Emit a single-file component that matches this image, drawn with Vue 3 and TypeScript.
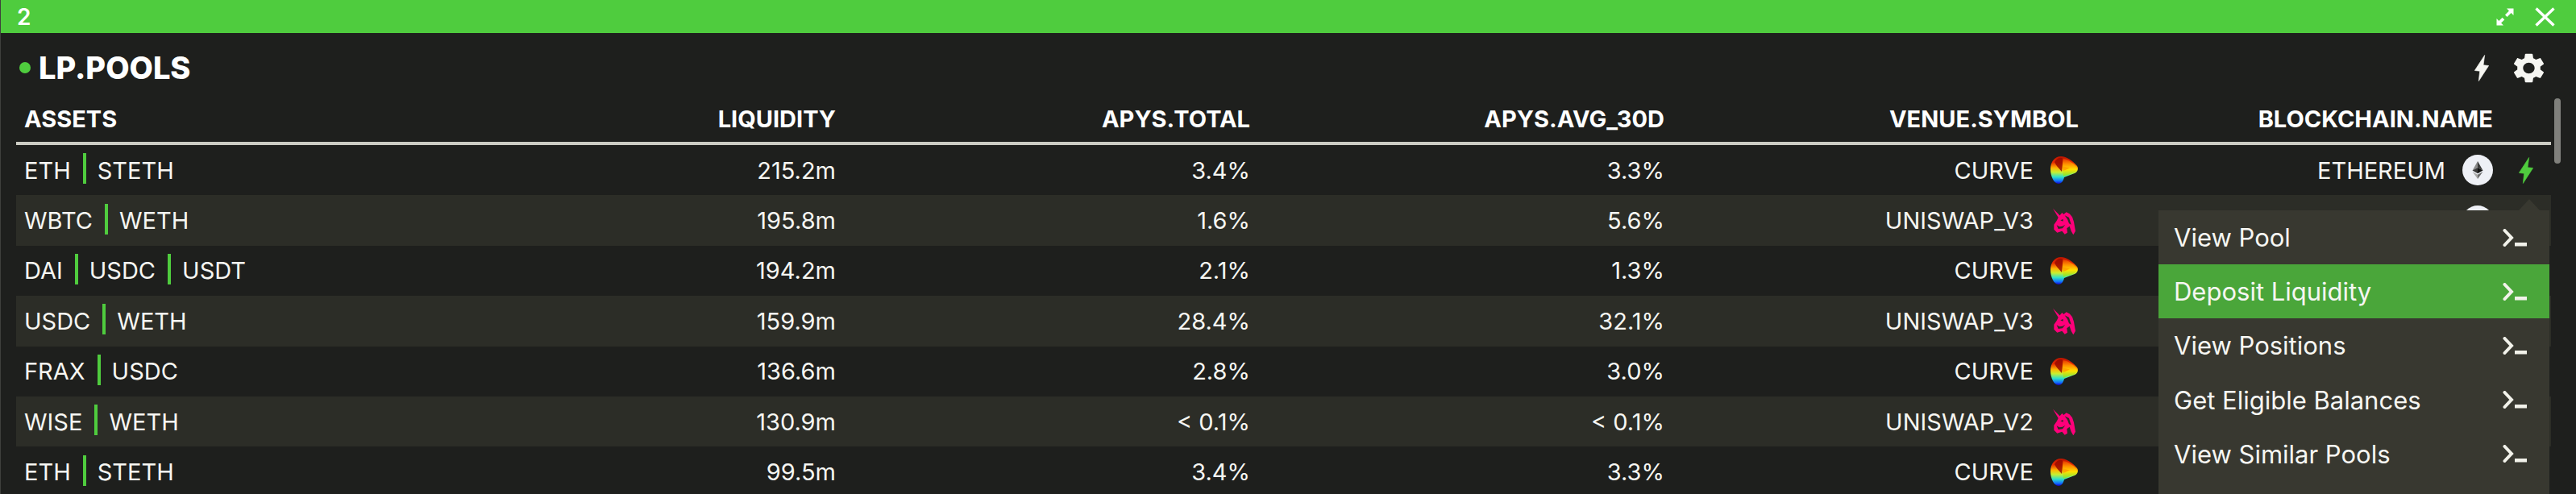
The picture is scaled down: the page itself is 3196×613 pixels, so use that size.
<script setup lang="ts">
interface Pool { assets: string[]; liq: string; total: string; avg: string; venue: string; curve: boolean }
const pools: Pool[] = [
  { assets: ['ETH', 'STETH'], liq: '215.2m', total: '3.4%', avg: '3.3%', venue: 'CURVE', curve: true },
  { assets: ['WBTC', 'WETH'], liq: '195.8m', total: '1.6%', avg: '5.6%', venue: 'UNISWAP_V3', curve: false },
  { assets: ['DAI', 'USDC', 'USDT'], liq: '194.2m', total: '2.1%', avg: '1.3%', venue: 'CURVE', curve: true },
  { assets: ['USDC', 'WETH'], liq: '159.9m', total: '28.4%', avg: '32.1%', venue: 'UNISWAP_V3', curve: false },
  { assets: ['FRAX', 'USDC'], liq: '136.6m', total: '2.8%', avg: '3.0%', venue: 'CURVE', curve: true },
  { assets: ['WISE', 'WETH'], liq: '130.9m', total: '< 0.1%', avg: '< 0.1%', venue: 'UNISWAP_V2', curve: false },
  { assets: ['ETH', 'STETH'], liq: '99.5m', total: '3.4%', avg: '3.3%', venue: 'CURVE', curve: true },
]
const menu = ['View Pool', 'Deposit Liquidity', 'View Positions', 'Get Eligible Balances', 'View Similar Pools']
const bolt = 'M38 1 L1 58 L20 60 L16 97 L53 40 L33 38 Z'
</script>

<template>
  <div class="win">
    <header class="bar">
      <span class="bar-num">2</span>
      <svg class="expand" viewBox="0 0 22 22" width="22" height="22">
        <path d="M13 0.5H21.5V9L18.6 6.1L13.6 11L11 8.4L15.9 3.4Z" fill="#fff" />
        <path d="M9 21.5H0.5V13L3.4 15.9L7.6 11.7L10.3 14.4L6.1 18.6Z" fill="#fff" />
      </svg>
      <svg class="close" viewBox="0 0 25 24" width="25" height="24">
        <path d="M1.5 1.5L23.5 22.5M23.5 1.5L1.5 22.5" stroke="#fff" stroke-width="3.4" fill="none" />
      </svg>
    </header>

    <div class="titlerow">
      <span class="dot"></span>
      <h1 class="title">LP.POOLS</h1>
      <svg class="t-bolt" viewBox="0 0 54 98" width="18" height="33">
        <path :d="bolt" fill="#f6f6f2" stroke="#f6f6f2" stroke-width="2" stroke-linejoin="round" />
      </svg>
      <svg class="gear" viewBox="2.7 2 18.6 20" width="37" height="37" preserveAspectRatio="none">
        <path fill="#f6f6f2" d="M19.14 12.94c.04-.3.06-.61.06-.94 0-.32-.02-.64-.07-.94l2.03-1.58c.18-.14.23-.41.12-.61l-1.92-3.32c-.12-.22-.37-.29-.59-.22l-2.39.96c-.5-.38-1.03-.7-1.62-.94l-.36-2.54c-.04-.24-.24-.41-.48-.41h-3.84c-.24 0-.43.17-.47.41l-.36 2.54c-.59.24-1.13.57-1.62.94l-2.39-.96c-.22-.08-.47 0-.59.22L2.74 8.87c-.12.21-.08.47.12.61l2.03 1.58c-.05.3-.09.63-.09.94s.02.64.07.94l-2.03 1.58c-.18.14-.23.41-.12.61l1.92 3.32c.12.22.37.29.59.22l2.39-.96c.5.38 1.03.7 1.62.94l.36 2.54c.05.24.24.41.48.41h3.84c.24 0 .44-.17.47-.41l.36-2.54c.59-.24 1.13-.56 1.62-.94l2.39.96c.22.08.47 0 .59-.22l1.92-3.32c.12-.22.07-.47-.12-.61l-2.01-1.58zM12 15.6c-1.98 0-3.6-1.62-3.6-3.6s1.62-3.6 3.6-3.6 3.6 1.62 3.6 3.6-1.62 3.6-3.6 3.6z" />
      </svg>
    </div>

    <div class="table">
      <div class="row head">
        <div class="cell first">ASSETS</div>
        <div class="cell">LIQUIDITY</div>
        <div class="cell">APYS.TOTAL</div>
        <div class="cell">APYS.AVG_30D</div>
        <div class="cell">VENUE.SYMBOL</div>
        <div class="cell">BLOCKCHAIN.NAME</div>
        <div class="cell"></div>
      </div>
      <div v-for="(p, i) in pools" :key="i" class="row body" :class="{ alt: i % 2 === 1 }">
        <div class="cell first">
          <template v-for="(a, j) in p.assets" :key="a">
            <span v-if="j > 0" class="sep"></span>
            <span>{{ a }}</span>
          </template>
        </div>
        <div class="cell">{{ p.liq }}</div>
        <div class="cell">{{ p.total }}</div>
        <div class="cell">{{ p.avg }}</div>
        <div class="cell with-icon">
          <span>{{ p.venue }}</span>
          <svg v-if="p.curve" class="venue-ic" viewBox="0 0 34 34" width="34" height="34">
            <defs>
              <linearGradient :id="'cv' + i" x1="0" y1="0" x2="0" y2="1">
                <stop offset="0" stop-color="#b81400" />
                <stop offset="0.22" stop-color="#e82c00" />
                <stop offset="0.42" stop-color="#ffb400" />
                <stop offset="0.58" stop-color="#c8f030" />
                <stop offset="0.75" stop-color="#30e0c8" />
                <stop offset="0.9" stop-color="#1070ff" />
                <stop offset="1" stop-color="#1400c8" />
              </linearGradient>
              <linearGradient :id="'cr' + i" x1="0" y1="0" x2="0" y2="1">
                <stop offset="0" stop-color="#e83800" />
                <stop offset="0.3" stop-color="#ff9000" />
                <stop offset="0.6" stop-color="#ffe000" />
                <stop offset="1" stop-color="#70e840" />
              </linearGradient>
            </defs>
            <path :fill="'url(#cv' + i + ')'" d="M13 0C20 0 28 6 33 12C35 15 34 19 30 21L17 26C16 31 13 34 10 34C4 34 0 24 0 16C0 7 5 0 13 0Z" />
            <path :fill="'url(#cr' + i + ')'" d="M14 3C21 3 28 8 32 13C34 16 33 18.500 30 20L16 25L15 14Z" />
            <path fill="#ffa000" d="M14 12L24 14.500L16 18Z" opacity="0.9" />
            <path fill="#980a00" d="M5 7C8 2 13 0.500 15.500 3L14 19C11 15 7 12 5 7Z" opacity="0.85" />
          </svg>
          <svg v-else class="venue-ic" viewBox="-9 -5 102 102" width="34" height="34">
            <path fill="#ff007a" d="M0 0L27 27L22 37Z" />
            <path fill="#ff007a" fill-rule="evenodd" d="M22 30L34 16L40 22L50 14L62 20L72 32L78 50L84 84L76 98L68 84L62 66L52 74L54 90L44 96L34 84L16 90L4 78L4 60L14 46ZM28 44L38 40L38 48ZM44 26L60 34L68 60L60 56L54 40ZM14 62L20 76L36 74L46 60L36 66L24 68Z" />
          </svg>
        </div>
        <div class="cell with-icon">
          <span>ETHEREUM</span>
          <svg class="eth-ic" viewBox="0 0 38 38" width="38" height="38">
            <circle cx="19" cy="19" r="19" fill="#eef0f6" />
            <path fill="#8a8a8a" d="M19 8L12.500 19.500L19 16Z" />
            <path fill="#3c3c3c" d="M19 8L25.500 19.500L19 16Z" />
            <path fill="#3a3a3a" d="M19 16L12.500 19.500L19 23.200Z" />
            <path fill="#141414" d="M19 16L25.500 19.500L19 23.200Z" />
            <path fill="#a8a8a8" d="M12.500 21L19 30V24.800Z" />
            <path fill="#6c6c6c" d="M25.500 21L19 30V24.800Z" />
          </svg>
        </div>
        <div class="cell bolt-cell">
          <svg v-if="i === 0" viewBox="0 0 54 98" width="18" height="33">
            <path :d="bolt" fill="#4fcc3e" stroke="#4fcc3e" stroke-width="2" stroke-linejoin="round" />
          </svg>
        </div>
      </div>
    </div>

    <div class="scroll"></div>

    <ul class="menu">
      <li v-for="(m, i) in menu" :key="m" class="item" :class="{ on: i === 1 }">
        <span>{{ m }}</span>
        <svg viewBox="0 0 30 22" width="30" height="22">
          <path d="M2.500 2L11 11L2.500 20" stroke="#f2f2ea" stroke-width="4" stroke-linecap="round" fill="none" />
          <rect x="15" y="17" width="15" height="4.500" fill="#f2f2ea" />
        </svg>
      </li>
    </ul>
  </div>
</template>

<style>
html, body { background: #1e1f1d; overflow: hidden; }
</style>

<style scoped>
.win {
  position: relative;
  width: 3196px;
  height: 613px;
  overflow: hidden;
  box-sizing: border-box;
  border-left: 1px solid #3f403c;
  background: #1e1f1d;
  color: #f6f6f2;
  font-family: Inter, "Liberation Sans", sans-serif;
  font-size: 29px;
}
.bar {
  display: flex;
  align-items: center;
  height: 41px;
  padding: 0 26px 0 20px;
  background: #4fcc3e;
  color: #fff;
  font-weight: 600;
  font-size: 28px;
}
.bar-num { flex: 1; }
.expand { margin-right: 26px; }
.titlerow {
  display: flex;
  align-items: center;
  height: 81px;
  padding: 5px 40px 0 23px;
  box-sizing: border-box;
}
.dot {
  width: 14px;
  height: 14px;
  border-radius: 50%;
  background: #4fcc3e;
  margin-right: 10px;
}
.title {
  flex: 1;
  margin: 0;
  font-size: 38px;
  font-weight: 800;
  color: #fff;
}
.t-bolt { margin-right: 31px; }
.table {
  width: 3145px;
  margin-left: 19px;
}
.row {
  display: grid;
  grid-template-columns: 513px 514px 514px 514px 514px 514px 62px;
  align-items: center;
}
.head {
  height: 50px;
  padding-bottom: 4px;
  box-sizing: content-box;
  border-bottom: 4px solid #ccccc4;
  font-weight: 700;
  color: #fff;
}
.body { height: 62.4px; }
.alt { background: #2c2d27; }
.cell {
  padding-right: 10px;
  text-align: right;
  white-space: nowrap;
}
.first {
  display: flex;
  align-items: center;
  padding-left: 10px;
  text-align: left;
}
.sep {
  width: 4px;
  height: 38px;
  margin: -4px 14px 0 15px;
  background: #4fcc3e;
}
.with-icon {
  display: flex;
  align-items: center;
  justify-content: flex-end;
}
.venue-ic { margin-left: 21px; margin-right: 1px; }
.eth-ic { margin-left: 21px; }
.bolt-cell {
  display: flex;
  justify-content: center;
  padding-right: 0;
}
.scroll {
  position: absolute;
  left: 3168px;
  top: 122px;
  width: 8px;
  height: 81px;
  border-radius: 4px;
  background: #80807c;
}
.menu {
  position: absolute;
  left: 2677px;
  top: 261px;
  width: 485px;
  height: 360px;
  margin: 0;
  padding: 0;
  list-style: none;
  background: #383830;
  font-size: 31px;
}
.menu::before {
  content: "";
  position: absolute;
  left: 447px;
  top: -14px;
  border-left: 13px solid transparent;
  border-right: 13px solid transparent;
  border-bottom: 14px solid #383830;
}
.item {
  display: flex;
  align-items: center;
  justify-content: space-between;
  height: 67.200px;
  padding: 0 28px 0 19px;
  box-sizing: border-box;
}
.on { background: #4aa63a; }
</style>
